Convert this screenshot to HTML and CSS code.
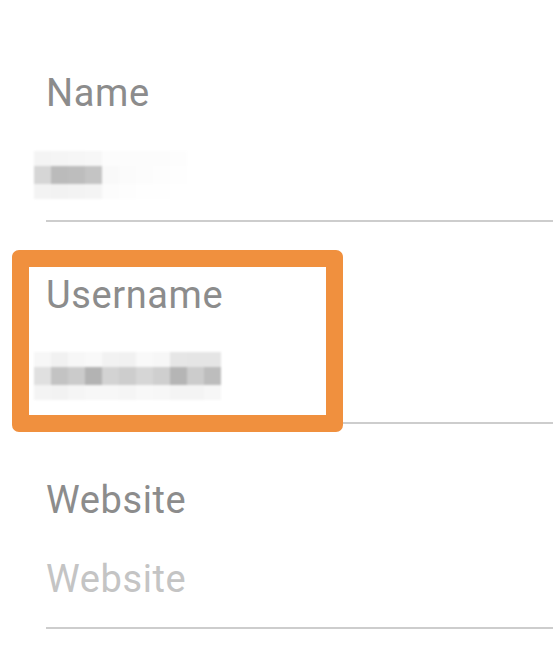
FILE: index.html
```html
<!DOCTYPE html>
<html lang="en">
<head>
<meta charset="utf-8">
<title>Edit profile</title>
<link rel="stylesheet" href="styles.css">
</head>
<body>
<div class="page">
  <form class="form">
    <div class="field">
      <div class="label">Name</div>
      <div class="value">
        <div class="pixels pixels-name">
          <span class="c" style="background:#f4f4f4"></span><span class="c" style="background:#f5f5f5"></span><span class="c" style="background:#f6f6f6"></span><span class="c" style="background:#f7f7f7"></span><span class="c" style="background:#fcfcfc"></span><span class="c" style="background:#fcfcfc"></span><span class="c" style="background:#fcfcfc"></span><span class="c" style="background:#fcfcfc"></span><span class="c" style="background:#fdfdfd"></span>
          <span class="c" style="background:#d6d6d6"></span><span class="c" style="background:#bbbbbb"></span><span class="c" style="background:#bdbdbd"></span><span class="c" style="background:#c4c4c4"></span><span class="c" style="background:#f9f9f9"></span><span class="c" style="background:#fbfbfb"></span><span class="c" style="background:#fcfcfc"></span><span class="c" style="background:#fdfdfd"></span><span class="c" style="background:#fefefe"></span>
          <span class="c" style="background:#f3f3f3"></span><span class="c" style="background:#f2f2f2"></span><span class="c" style="background:#f3f3f3"></span><span class="c" style="background:#f4f4f4"></span><span class="c" style="background:#fcfcfc"></span><span class="c" style="background:#fdfdfd"></span><span class="c" style="background:#fefefe"></span><span class="c" style="background:#fefefe"></span><span class="c" style="background:#ffffff"></span>
        </div>
      </div>
    </div>
    <div class="field">
      <div class="label">Username</div>
      <div class="value">
        <div class="pixels pixels-user">
          <span class="c" style="background:#f7f7f7"></span><span class="c" style="background:#f1f1f1"></span><span class="c" style="background:#f7f7f7"></span><span class="c" style="background:#f9f9f9"></span><span class="c" style="background:#f2f2f2"></span><span class="c" style="background:#f1f1f1"></span><span class="c" style="background:#f9f9f9"></span><span class="c" style="background:#f7f7f7"></span><span class="c" style="background:#e6e6e6"></span><span class="c" style="background:#e5e5e5"></span><span class="c" style="background:#e5e5e5"></span>
          <span class="c" style="background:#e0e0e0"></span><span class="c" style="background:#c3c3c3"></span><span class="c" style="background:#cbcbcb"></span><span class="c" style="background:#b3b3b3"></span><span class="c" style="background:#d3d3d3"></span><span class="c" style="background:#cdcdcd"></span><span class="c" style="background:#d6d6d6"></span><span class="c" style="background:#cfcfcf"></span><span class="c" style="background:#b5b5b5"></span><span class="c" style="background:#cccccc"></span><span class="c" style="background:#bdbdbd"></span>
          <span class="c" style="background:#f4f4f4"></span><span class="c" style="background:#f2f2f2"></span><span class="c" style="background:#f5f5f5"></span><span class="c" style="background:#f7f7f7"></span><span class="c" style="background:#f7f7f7"></span><span class="c" style="background:#f5f5f5"></span><span class="c" style="background:#f8f8f8"></span><span class="c" style="background:#f7f7f7"></span><span class="c" style="background:#f4f4f4"></span><span class="c" style="background:#f4f4f4"></span><span class="c" style="background:#f7f7f7"></span>
        </div>
      </div>
    </div>
    <div class="field field-last">
      <div class="label">Website</div>
      <div class="value placeholder">Website</div>
    </div>
  </form>
  <div class="highlight" aria-hidden="true"></div>
</div>
</body>
</html>
```

FILE: styles.css
```css
* {
  box-sizing: border-box;
}

html, body {
  margin: 0;
  padding: 0;
  background: #ffffff;
}

body {
  font-family: Roboto, "Liberation Sans", sans-serif;
  overflow: hidden;
}

.page {
  position: relative;
  width: 553px;
  height: 646px;
  padding-top: 20px;
}

.form {
  display: flex;
  flex-direction: column;
  margin-left: 46px;
}

.field {
  display: flex;
  flex-direction: column;
  padding-top: 51px;
  border-bottom: 2px solid #cdcdcd;
}

.field-last {
  padding-top: 54px;
}

.label {
  font-size: 38px;
  line-height: 44px;
  color: #8c8c8c;
  letter-spacing: 0.6px;
}

.value {
  height: 44px;
  margin-top: 35px;
  margin-bottom: 26px;
  font-size: 38px;
  line-height: 44px;
  color: #333333;
}

.placeholder {
  color: #c4c4c4;
  letter-spacing: 0.6px;
}

.pixels {
  display: grid;
  grid-template-rows: 15px 18px 15px;
  margin-left: -12px;
  margin-top: 0;
  filter: blur(1.2px);
}

.pixels-name {
  grid-template-columns: repeat(9, 17px);
  margin-top: 1px;
}

.pixels-user {
  grid-template-columns: repeat(11, 17px);
}

.c {
  display: block;
}

.highlight {
  position: absolute;
  left: 12px;
  top: 250px;
  width: 331px;
  height: 182px;
  border: 17px solid #f0903e;
  border-radius: 7px;
}
```
